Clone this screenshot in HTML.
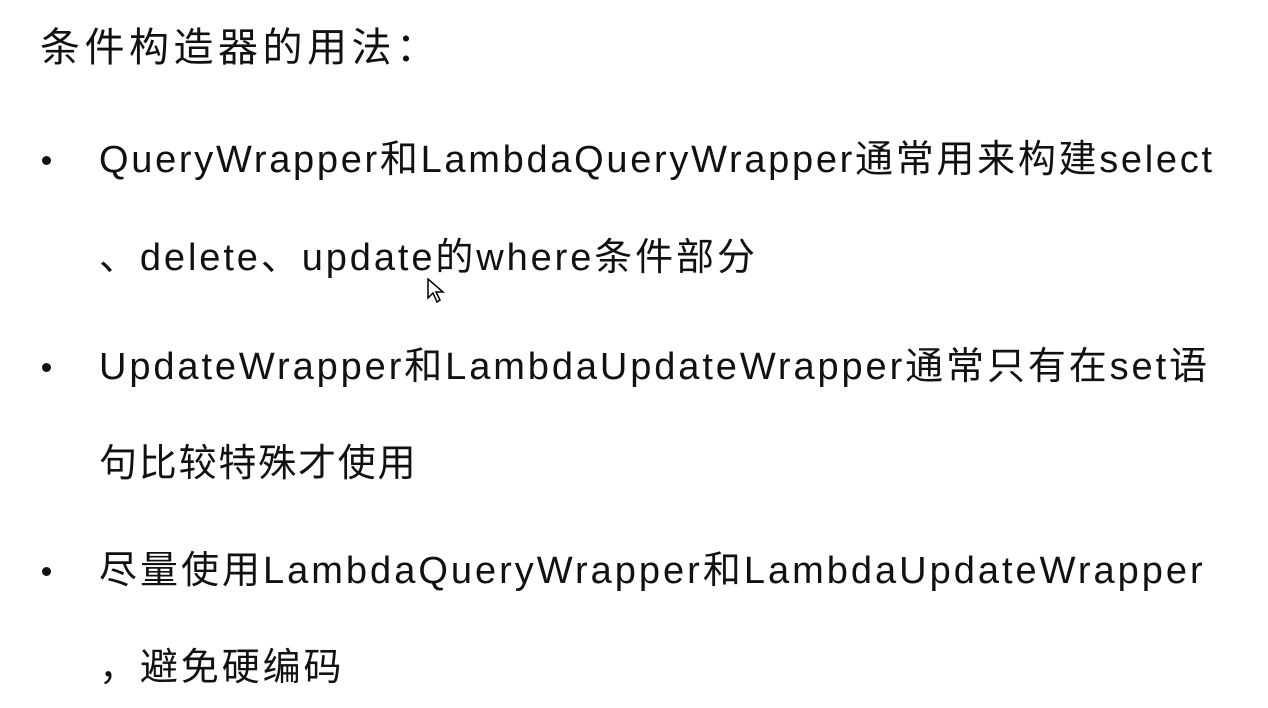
<!DOCTYPE html>
<html><head><meta charset="utf-8"><style>
body{margin:0;width:1268px;height:708px;background:#fff;overflow:hidden;font-family:"Liberation Sans","Noto Sans CJK SC",sans-serif;color:#111;position:relative}
.t{position:absolute;white-space:nowrap;font-size:38px;line-height:40px;letter-spacing:2.9px}
.b{position:absolute;left:42px;width:9px;height:9px;border-radius:50%;background:#111}
</style></head><body>
<div class="t" style="left:40px;top:28px;font-size:40px;letter-spacing:4.5px">条件构造器的用法：</div>
<div class="b" style="top:156px"></div>
<div class="t" style="left:99px;top:140px;letter-spacing:2.7px">QueryWrapper和LambdaQueryWrapper通常用来构建select</div>
<div class="t" style="left:99px;top:238px">、delete、update的where条件部分</div>
<div class="b" style="top:363px"></div>
<div class="t" style="left:99px;top:347px">UpdateWrapper和LambdaUpdateWrapper通常只有在set语</div>
<div class="t" style="left:99px;top:444px;letter-spacing:1.8px">句比较特殊才使用</div>
<div class="b" style="top:567px"></div>
<div class="t" style="left:99px;top:551px;letter-spacing:3px">尽量使用LambdaQueryWrapper和LambdaUpdateWrapper</div>
<div class="t" style="left:99px;top:648px">，避免硬编码</div>
<svg style="position:absolute;left:427px;top:278px" width="18" height="26" viewBox="0 0 18 26"><path d="M1 1 L1 20 L6 15 L10 24 L13 22 L9 14 L16 14 Z" fill="#fff" stroke="#000" stroke-width="1.5"/></svg>
</body></html>
